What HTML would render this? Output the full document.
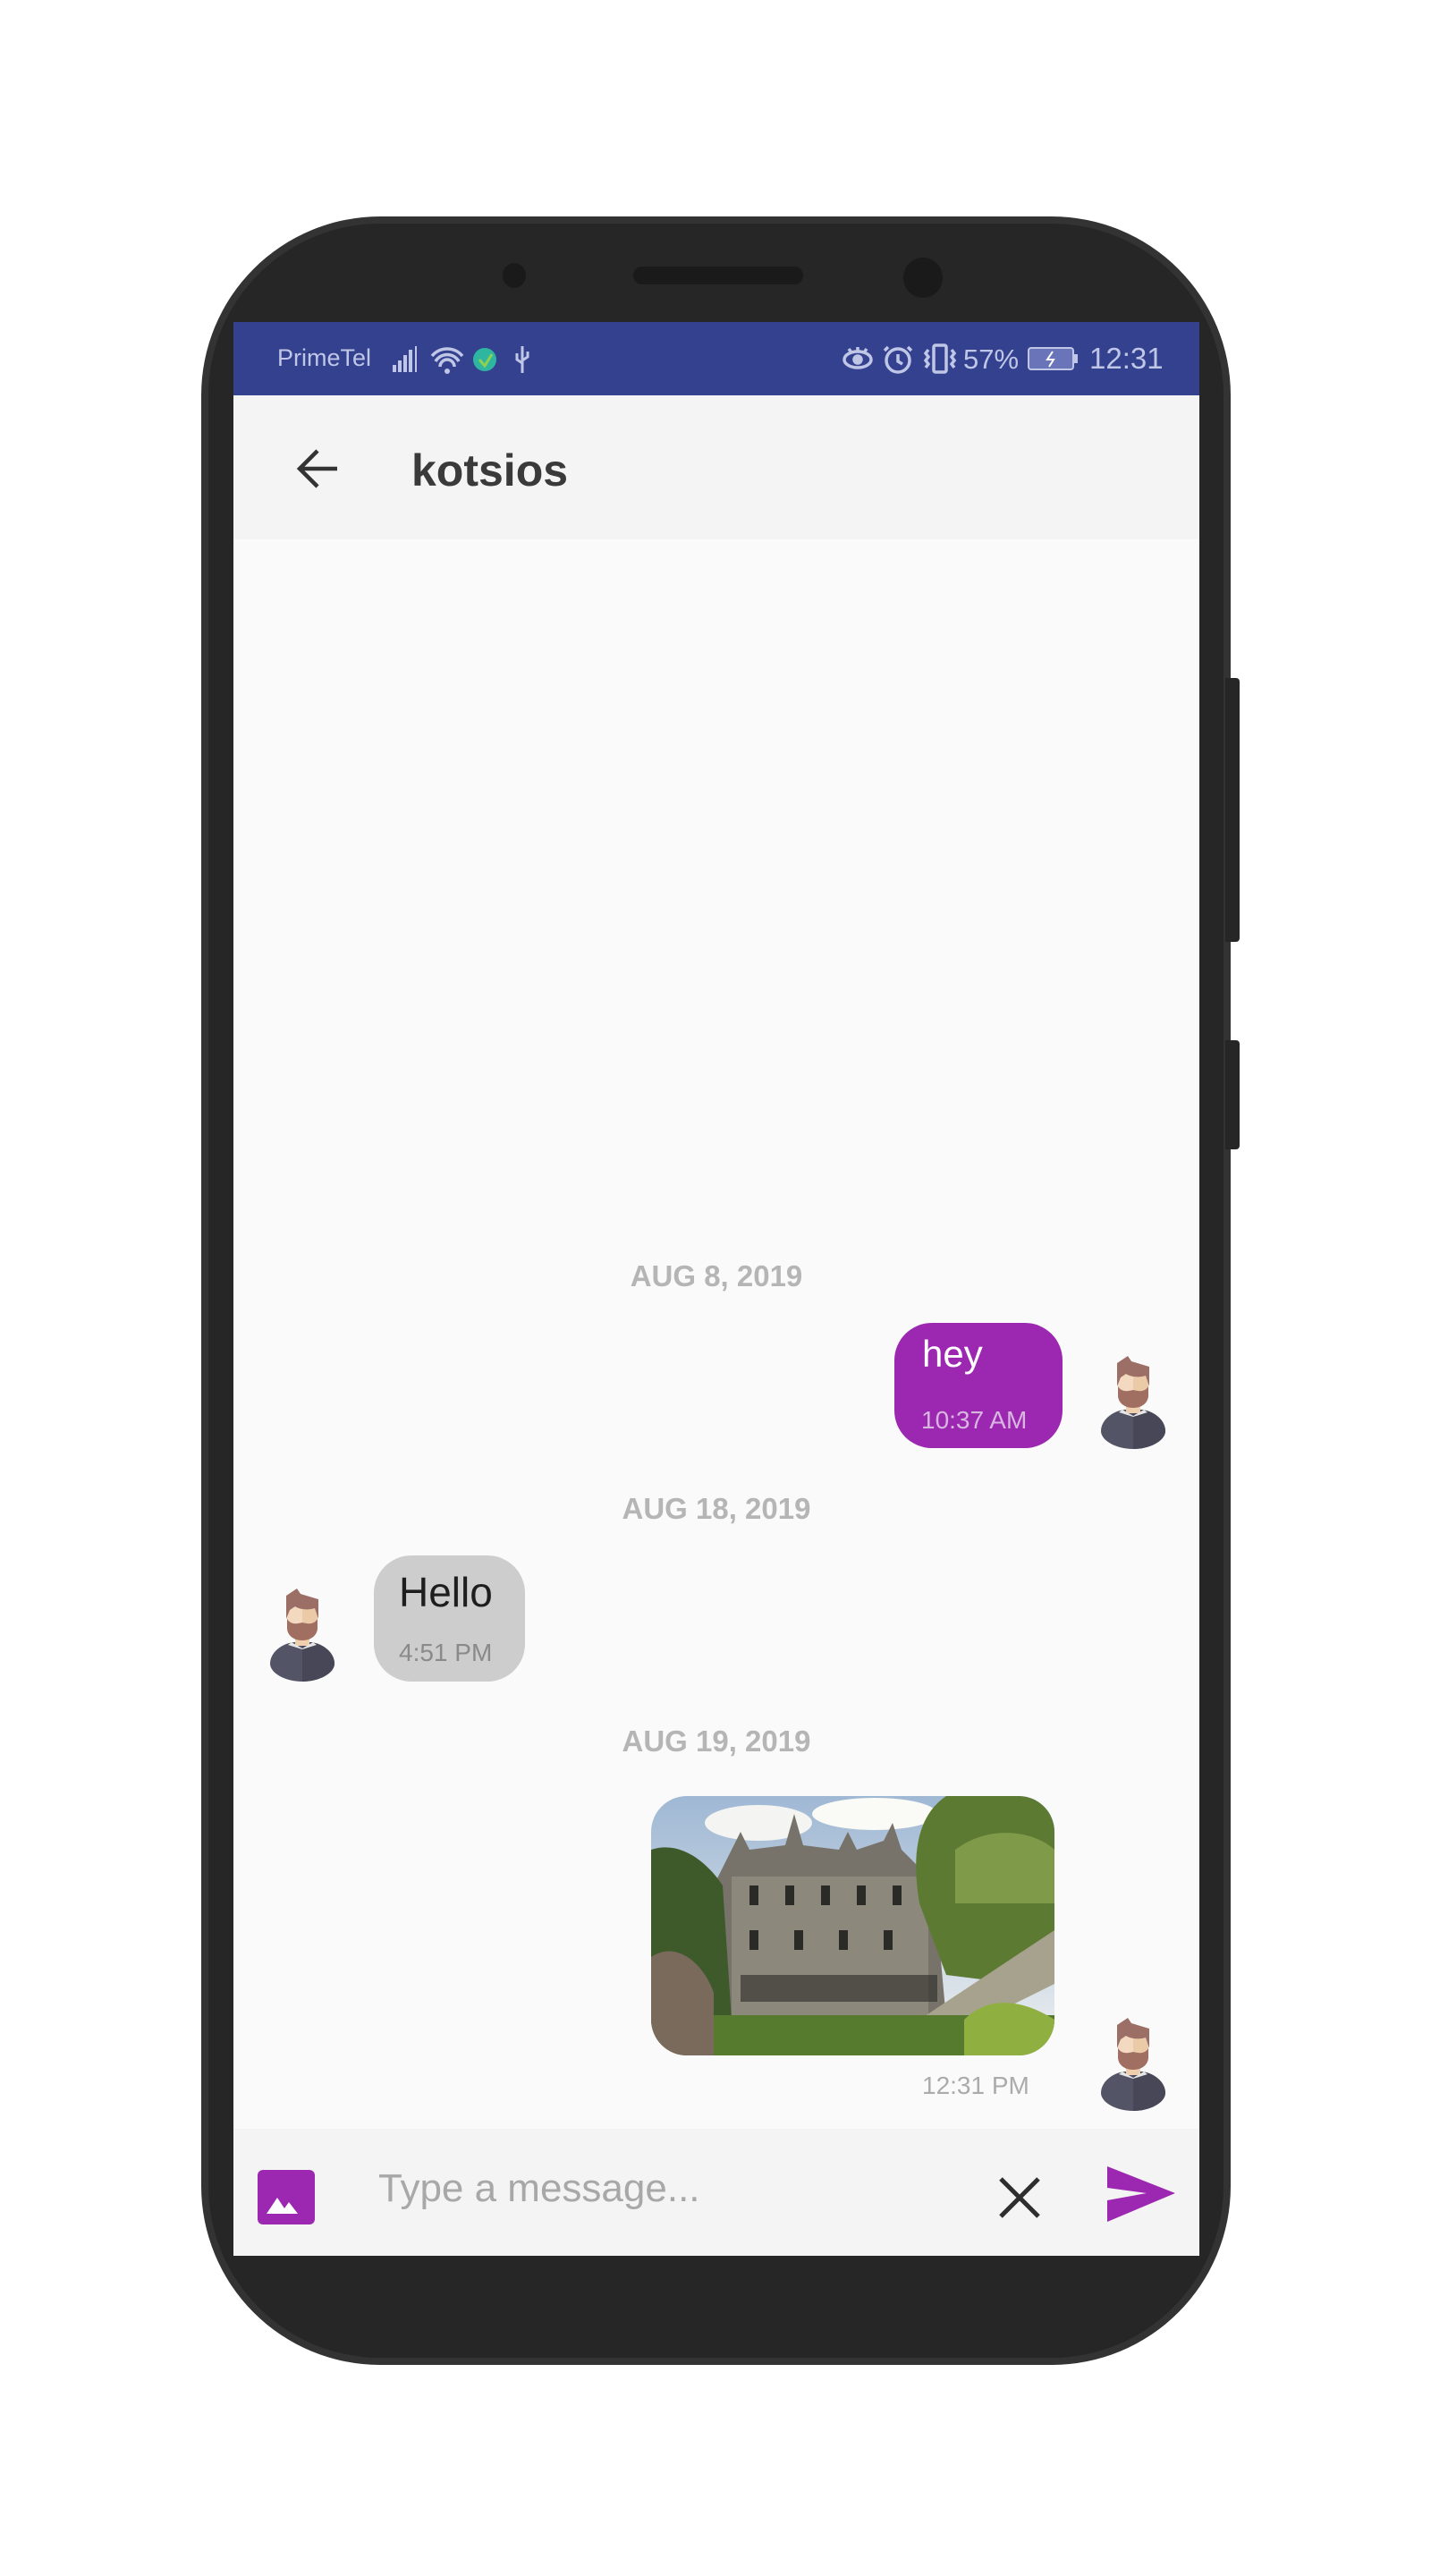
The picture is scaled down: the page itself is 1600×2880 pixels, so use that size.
<!DOCTYPE html>
<html><head><meta charset="utf-8"><style>
*{margin:0;padding:0;box-sizing:border-box}
body{width:1600px;height:2880px;background:#fff;position:relative;overflow:hidden;font-family:"Liberation Sans",Arial,sans-serif}
.abs{position:absolute}
.phone{left:225px;top:242px;width:1151px;height:2402px;background:#333;border-radius:200px}
.phone2{left:233px;top:250px;width:1135px;height:2386px;background:#262626;border-radius:192px}
.btn{background:#262626;left:1370px;width:16px;border-radius:0 4px 4px 0}
.screen{left:261px;top:360px;width:1080px;height:2162px;background:#fafafa;overflow:hidden}
.status{left:0;top:0;width:1080px;height:82px;background:#33418f;color:#c0c6e6;font-size:27px}
.appbar{left:0;top:82px;width:1080px;height:161px;background:#f4f4f4}
.date{width:1080px;left:0;text-align:center;color:#b5b5b5;font-weight:bold;font-size:33px}
.input{left:0;top:2020px;width:1080px;height:142px;background:#f4f4f4}
</style></head><body>
<div class="abs phone"></div>
<div class="abs phone2"></div>
<div class="abs btn" style="top:758px;height:295px"></div>
<div class="abs btn" style="top:1163px;height:122px"></div>
<div class="abs" style="left:562px;top:294px;width:26px;height:28px;border-radius:50%;background:#1a1a1a"></div>
<div class="abs" style="left:708px;top:298px;width:190px;height:20px;border-radius:10px;background:#1a1a1a"></div>
<div class="abs" style="left:1010px;top:288px;width:44px;height:45px;border-radius:50%;background:#1a1a1a"></div>

<div class="abs screen">
 <div class="abs status">
  <div class="abs" style="left:49px;top:25px">PrimeTel</div>
  <svg class="abs" style="left:178px;top:24px" width="160" height="36" viewBox="0 0 160 36">
   <g fill="#c0c6e6"><rect x="0" y="24" width="4" height="8"/><rect x="6" y="19" width="4" height="13"/><rect x="12" y="13" width="4" height="19"/><rect x="18" y="7" width="4" height="25"/><rect x="25" y="3" width="2" height="29"/></g>
   <path d="M44 14a22 22 0 0 1 34 0M48 20a15 15 0 0 1 26 0M53 26a8 8 0 0 1 16 0" stroke="#c0c6e6" stroke-width="3.5" fill="none"/><circle cx="61" cy="31" r="3" fill="#c0c6e6"/>
   <circle cx="103" cy="18" r="13" fill="#2fb6a0"/><path d="M97 18l6 7 8-13" stroke="#8fd14f" stroke-width="3" fill="none"/>
   <path d="M145 3v30M139 11v7l6 4M151 9v6l-6 4" stroke="#c0c6e6" stroke-width="3" fill="none"/>
  </svg>
  <svg class="abs" style="left:680px;top:22px" width="130" height="38" viewBox="0 0 130 38">
   <g stroke="#c0c6e6" stroke-width="3.5" fill="none"><ellipse cx="18" cy="20" rx="15" ry="9"/><circle cx="18" cy="20" r="4" fill="#c0c6e6"/><path d="M8 8l3 4M18 6v5M28 8l-3 4"/><circle cx="63" cy="21" r="13"/><path d="M63 14v8l5 3M52 6l-4 4M74 6l4 4"/><rect x="103" y="4" width="14" height="30" rx="2"/><path d="M97 9l-3 4 3 4-3 4 3 4 -3 4M123 9l3 4-3 4 3 4-3 4 3 4"/></g>
  </svg>
  <div class="abs" style="left:816px;top:24px;font-size:31px">57%</div>
  <svg class="abs" style="left:888px;top:27px" width="58" height="28"><rect x="1" y="2" width="50" height="24" rx="3" fill="#6a74b8" stroke="#c0c6e6" stroke-width="2"/><rect x="52" y="9" width="4" height="10" fill="#c0c6e6"/><path d="M28 6l-6 9h7l-5 8" stroke="#fff" stroke-width="2" fill="none"/></svg>
  <div class="abs" style="left:957px;top:22px;font-size:33px">12:31</div>
 </div>
 <div class="abs appbar">
  <svg class="abs" style="left:66px;top:57px" width="56" height="50" viewBox="0 0 56 50"><path d="M50 25H8M28 5L8 25l20 20" stroke="#333" stroke-width="4.5" fill="none"/></svg>
  <div class="abs" style="left:199px;top:55px;font-size:50px;font-weight:bold;color:#3a3a3a">kotsios</div>
 </div>

 <div class="abs date" style="top:1048px">AUG 8, 2019</div>
 <div class="abs" style="left:739px;top:1119px;width:188px;height:140px;border-radius:42px;background:#9c27b0"></div>
 <div class="abs" style="left:770px;top:1130px;font-size:42px;color:#fff">hey</div>
 <div class="abs" style="left:769px;top:1212px;font-size:28px;color:#d8b6e0">10:37 AM</div>

 <div class="abs date" style="top:1308px">AUG 18, 2019</div>
 <div class="abs" style="left:157px;top:1379px;width:169px;height:141px;border-radius:42px;background:#cdcdcd"></div>
 <div class="abs" style="left:185px;top:1393px;font-size:46px;color:#1e1e1e">Hello</div>
 <div class="abs" style="left:185px;top:1472px;font-size:28px;color:#8a8a8a">4:51 PM</div>

 <div class="abs date" style="top:1568px">AUG 19, 2019</div>
 <svg class="abs" style="left:467px;top:1648px" width="451" height="290" viewBox="0 0 451 290">
  <defs><clipPath id="c"><rect width="451" height="290" rx="40"/></clipPath>
  <linearGradient id="sky" x1="0" y1="0" x2="0" y2="1"><stop offset="0" stop-color="#9fb8d4"/><stop offset="1" stop-color="#eef0f0"/></linearGradient></defs>
  <g clip-path="url(#c)">
   <rect width="451" height="290" fill="url(#sky)"/>
   <ellipse cx="120" cy="30" rx="60" ry="20" fill="#f4f4f2"/><ellipse cx="250" cy="20" rx="70" ry="18" fill="#fafaf6"/>
   <path d="M70 100L90 60 100 40 110 60 150 55 160 20 170 55 210 60 220 40 230 60 260 50 270 30 280 60 300 80 320 140 330 250H80z" fill="#77736a"/>
   <path d="M90 90h220v160H90z" fill="#8d887c"/>
   <g fill="#2a2a26"><rect x="110" y="100" width="10" height="22"/><rect x="150" y="100" width="10" height="22"/><rect x="190" y="100" width="10" height="22"/><rect x="230" y="100" width="10" height="22"/><rect x="270" y="100" width="10" height="22"/><rect x="110" y="150" width="10" height="22"/><rect x="160" y="150" width="10" height="22"/><rect x="210" y="150" width="10" height="22"/><rect x="260" y="150" width="10" height="22"/><rect x="100" y="200" width="220" height="30" opacity=".6"/></g>
   <path d="M0 60C30 50 60 70 80 100L90 250H0z" fill="#3f5a2a"/>
   <path d="M300 0h151v200L410 210 330 200 300 120C290 60 300 20 330 0z" fill="#5d7a33"/>
   <path d="M340 60C380 30 430 40 451 60v60H340z" fill="#7f9a48"/>
   <path d="M300 250L451 150v60L330 270z" fill="#a7a28e"/>
   <rect y="245" width="451" height="45" fill="#567a2e"/>
   <path d="M0 180c30-20 60 10 70 40v70H0z" fill="#7a6a5c"/>
   <path d="M350 250c30-30 70-20 101 0v40H350z" fill="#8fb040"/>
  </g>
 </svg>
 <div class="abs" style="left:770px;top:1956px;font-size:28px;color:#ababab">12:31 PM</div>

 <div class="abs input">
  <svg class="abs" style="left:27px;top:46px" width="64" height="61" viewBox="0 0 64 61"><rect width="64" height="61" rx="6" fill="#9c27b0"/><path d="M10 49l12-18 8 12 5-7 10 13z" fill="#fff"/></svg>
  <div class="abs" style="left:162px;top:42px;font-size:44px;color:#a8a8a8">Type a message...</div>
  <svg class="abs" style="left:854px;top:52px" width="50" height="50" viewBox="0 0 50 50"><path d="M4 4l42 42M46 4L4 46" stroke="#2e2e2e" stroke-width="5"/></svg>
  <svg class="abs" style="left:977px;top:42px" width="76" height="62" viewBox="0 0 76 62"><path d="M0 0L76 30 0 62 0 38 44 30 0 24z" fill="#9c27b0"/></svg>
 </div>
</div>

<svg width="0" height="0" style="position:absolute"><defs><g id="av">
 <path d="M2 84c0-12 12-22 26-24h20c14 2 26 12 26 24 0 10-16 20-36 20S2 94 2 84z" fill="#535466"/>
 <path d="M38 60h10c14 2 26 12 26 24 0 10-16 20-36 20z" fill="#474757"/>
 <rect x="30" y="48" width="16" height="16" fill="#f0cfae"/>
 <path d="M26 60l12 7 12-7 4 3-16 5-16-5z" fill="#e6e6e6"/>
 <path d="M21 18h34v24c0 10-7 14-17 14s-17-4-17-14z" fill="#f3d9bf"/>
 <path d="M38 18h17v24c0 10-7 14-17 14z" fill="#ebcaa8"/>
 <path d="M21 34c4 6 9 6 17 4 8 2 13 2 17-4v10c0 8-7 14-17 14s-17-6-17-14z" fill="#a16f61"/>
 <path d="M20 34V8l12-8 4 6 20 6v22l-4-12c-6 2-16 2-22-2l-6 4z" fill="#9b6f66"/>
</g></defs></svg>
<svg class="abs" style="left:1229px;top:1516px" width="76" height="104"><use href="#av"/></svg>
<svg class="abs" style="left:300px;top:1776px" width="76" height="104"><use href="#av"/></svg>
<svg class="abs" style="left:1229px;top:2256px" width="76" height="104"><use href="#av"/></svg>
</body></html>
